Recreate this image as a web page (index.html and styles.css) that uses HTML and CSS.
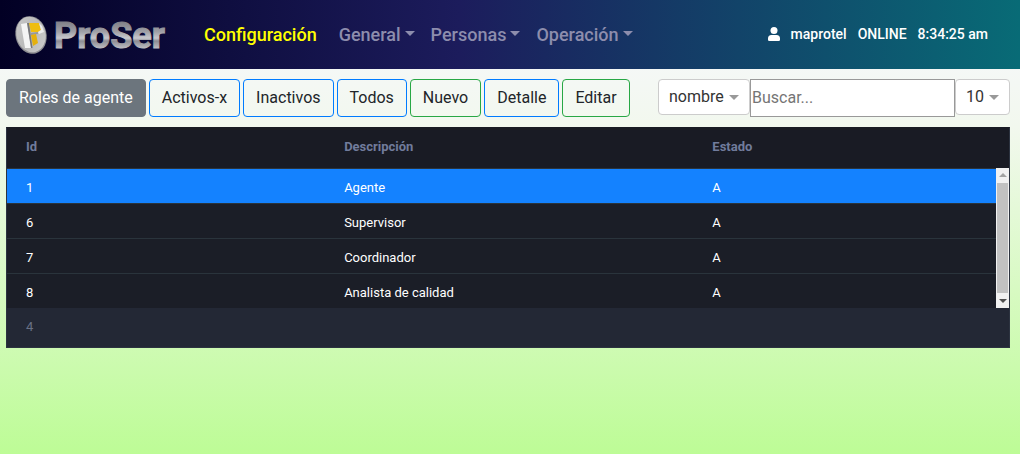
FILE: index.html
```html
<!DOCTYPE html>
<html lang="es">
<head>
<meta charset="utf-8">
<meta name="viewport" content="width=device-width, initial-scale=1">
<title>ProSer - Roles de agente</title>
<link rel="stylesheet" href="styles.css">
</head>
<body>
<header class="navbar">
  <svg class="logo" viewBox="0 0 156 46" width="156" height="46" role="img" aria-label="ProSer">
    <defs>
      <linearGradient id="disc" x1="0" y1="0" x2="1" y2="1">
        <stop offset="0" stop-color="#c9c9c9"/>
        <stop offset="0.5" stop-color="#b9b9b9"/>
        <stop offset="1" stop-color="#cfcfcf"/>
      </linearGradient>
      <linearGradient id="metal" x1="0" y1="0" x2="0" y2="1">
        <stop offset="0.1" stop-color="#77777f"/>
        <stop offset="0.4" stop-color="#a0a0a6"/>
        <stop offset="0.55" stop-color="#c8c8cd"/>
        <stop offset="0.62" stop-color="#8d8d94"/>
        <stop offset="0.8" stop-color="#c0c0c5"/>
        <stop offset="1" stop-color="#b4b4ba"/>
      </linearGradient>
    </defs>
    <ellipse cx="17" cy="21" rx="15.500" ry="19" fill="#8e8e92" transform="rotate(-14 17 21)"/>
    <ellipse cx="17" cy="20.500" rx="14.500" ry="18" fill="url(#disc)" transform="rotate(-14 17 20.500)"/>
    <path d="M7 10 L13 9 L17 34 L11 34 Z" fill="#f4f4f4"/>
    <path d="M13 9 L15 9 L18.500 34 L17 34 Z" fill="#77777a"/>
    <path d="M15 9 L25 9 L27 16 L24 18 L17 18 Z" fill="#efbd10"/>
    <path d="M17 19 L24 18 L24 20 L17 21 Z" fill="#98989b"/>
    <path d="M17 21 L22 20 L24 29 L19 32 Z" fill="#e5b00c"/>
    <path d="M25 9 L28 12 L30 18 L25 20 L24 18 L27 16 Z" fill="#ececec"/>
    <text class="logo-text" x="40" y="34" fill="url(#metal)" stroke="url(#metal)">ProSer</text>
  </svg>
  <nav class="menu">
    <a class="menu-title" href="#">Configuración</a>
    <a class="menu-link caret" href="#">General</a>
    <a class="menu-link caret" href="#">Personas</a>
    <a class="menu-link caret" href="#">Operación</a>
  </nav>
  <div class="session">
    <svg class="user-icon" viewBox="0 0 12 14" width="12" height="14" aria-hidden="true">
      <circle cx="6" cy="3.500" r="3.500" fill="currentColor"/>
      <path d="M3.500 8h5A3.500 3.500 0 0 1 12 11.500v1.200A1.300 1.300 0 0 1 10.700 14H1.300A1.300 1.300 0 0 1 0 12.700v-1.200A3.500 3.500 0 0 1 3.500 8z" fill="currentColor"/>
    </svg>
    <span>maprotel</span>
    <span>ONLINE</span>
    <span>8:34:25 am</span>
  </div>
</header>

<main class="content">
  <div class="toolbar">
    <div class="actions">
      <button class="btn btn-title" type="button">Roles de agente</button>
      <button class="btn btn-blue" type="button">Activos-x</button>
      <button class="btn btn-blue" type="button">Inactivos</button>
      <button class="btn btn-blue" type="button">Todos</button>
      <button class="btn btn-green" type="button">Nuevo</button>
      <button class="btn btn-blue" type="button">Detalle</button>
      <button class="btn btn-green" type="button">Editar</button>
    </div>
    <div class="search">
      <span class="picker"><select class="picker-select" aria-label="Campo de búsqueda"><option>nombre</option></select></span>
      <input class="search-box" type="text" placeholder="Buscar..." aria-label="Buscar">
      <span class="picker"><select class="picker-select" aria-label="Filas"><option>10</option></select></span>
    </div>
  </div>

  <div class="grid">
    <table class="roles">
      <colgroup><col class="col-id"><col class="col-name"><col></colgroup>
      <thead>
        <tr><th scope="col">Id</th><th scope="col">Descripción</th><th scope="col">Estado</th></tr>
      </thead>
      <tbody>
        <tr class="selected"><td>1</td><td>Agente</td><td>A</td></tr>
        <tr><td>6</td><td>Supervisor</td><td>A</td></tr>
        <tr><td>7</td><td>Coordinador</td><td>A</td></tr>
        <tr><td>8</td><td>Analista de calidad</td><td>A</td></tr>
      </tbody>
      <tfoot>
        <tr><td colspan="3">4</td></tr>
      </tfoot>
    </table>
    <div class="scrollbar" aria-hidden="true">
      <span class="arrow arrow-up"></span>
      <span class="thumb"></span>
      <span class="arrow arrow-down"></span>
    </div>
  </div>
</main>
</body>
</html>
```
FILE: styles.css
```css
* {
  box-sizing: border-box;
}

body {
  margin: 0;
  min-height: 100vh;
  font-family: Roboto, "Liberation Sans", sans-serif;
  font-size: 16px;
  line-height: 24px;
  color: #212529;
  background: linear-gradient(#f8f8ff 0, #f2f8ee 28%, #bdfc96 100%);
}

.navbar {
  display: flex;
  align-items: flex-start;
  padding: 14px 32px 9px 14px;
  background: linear-gradient(90deg, #020024 0, #1c1c5c 45%, #086b76 100%);
}

.logo {
  flex: none;
  margin-right: 34px;
  overflow: visible;
}

.logo-text {
  font-family: Roboto, "Liberation Sans", sans-serif;
  font-size: 36px;
  font-weight: 700;
  stroke-width: 1px;
}

.menu {
  display: flex;
  align-items: center;
  padding-top: 9px;
  font-size: 18px;
  font-weight: 500;
}

.menu-title {
  margin-right: 14px;
  color: #ffff00;
  text-decoration: none;
}

.menu-link {
  padding: 0 8px;
  color: #8d8dad;
  text-decoration: none;
}

.caret::after {
  content: "";
  display: inline-block;
  margin-left: 4px;
  vertical-align: 5px;
  border: 5px solid transparent;
  border-top-color: currentColor;
  border-bottom: 0;
}

.session {
  display: flex;
  align-items: center;
  gap: 11px;
  margin-left: auto;
  padding-top: 8px;
  font-size: 14px;
  font-weight: 500;
  color: #fff;
}

.content {
  padding: 10px 10px 0 6px;
}

.toolbar {
  display: flex;
  justify-content: space-between;
  align-items: flex-start;
  margin-bottom: 10px;
}

.actions {
  display: flex;
  gap: 3px;
}

.btn {
  padding: 6px 12px;
  border: 1px solid;
  border-radius: 4px;
  font: inherit;
  color: #212529;
  background: transparent;
}

.btn-title {
  color: #fff;
  background: #6c757d;
  border-color: #6c757d;
}

.btn-blue {
  border-color: #007bff;
}

.btn-green {
  border-color: #28a745;
}

.search {
  display: flex;
  align-items: flex-start;
}

.picker {
  position: relative;
}

.picker::after {
  content: "";
  position: absolute;
  top: 16px;
  right: 11px;
  border: 5px solid transparent;
  border-top-color: #999;
  border-bottom: 0;
  pointer-events: none;
}

.picker-select {
  display: block;
  height: 36px;
  padding: 0 25px 0 10px;
  appearance: none;
  border: 1px solid #ccc;
  border-radius: 4px;
  font: inherit;
  color: #333;
  background: #fff;
}

.search-box {
  width: 205px;
  height: 38px;
  padding: 0 1px 2px;
  border: 1px solid #999;
  font: inherit;
  background: #fff;
}

.search-box::placeholder {
  color: #757575;
}

.grid {
  position: relative;
  border: 1px solid #2c3340;
  border-top-color: #191b24;
  background: #232835;
}

.roles {
  width: 100%;
  table-layout: fixed;
  border-collapse: collapse;
  font-size: 13px;
  line-height: 18px;
  color: #fff;
}

.col-id {
  width: 31.75%;
}

.col-name {
  width: 36.75%;
}

.roles th,
.roles td {
  height: 35px;
  padding: 4px 19px 0;
  text-align: left;
}

.roles th {
  height: 40px;
  padding: 0 19px 2px;
  font-weight: 700;
  color: #717c9c;
  background: #191b24;
}

.roles tbody tr {
  background: #1b1e27;
  border-top: 1px solid #2a343c;
}

.roles tbody .selected {
  background: #1482ff;
}

.roles tfoot td {
  height: 39px;
  padding: 0 19px 2px;
  color: #697186;
}

.scrollbar {
  position: absolute;
  top: 40px;
  right: 0;
  bottom: 39px;
  display: flex;
  flex-direction: column;
  align-items: center;
  width: 13px;
  padding: 5px 0;
  background: #f1f1f1;
}

.thumb {
  flex: 1;
  width: 11px;
  margin: 6px 0;
  background: #c1c1c1;
}

.arrow {
  border: 4px solid transparent;
}

.arrow-up {
  border-top: 0;
  border-bottom-color: #a3a3a3;
}

.arrow-down {
  border-bottom: 0;
  border-top-color: #505050;
}
```
